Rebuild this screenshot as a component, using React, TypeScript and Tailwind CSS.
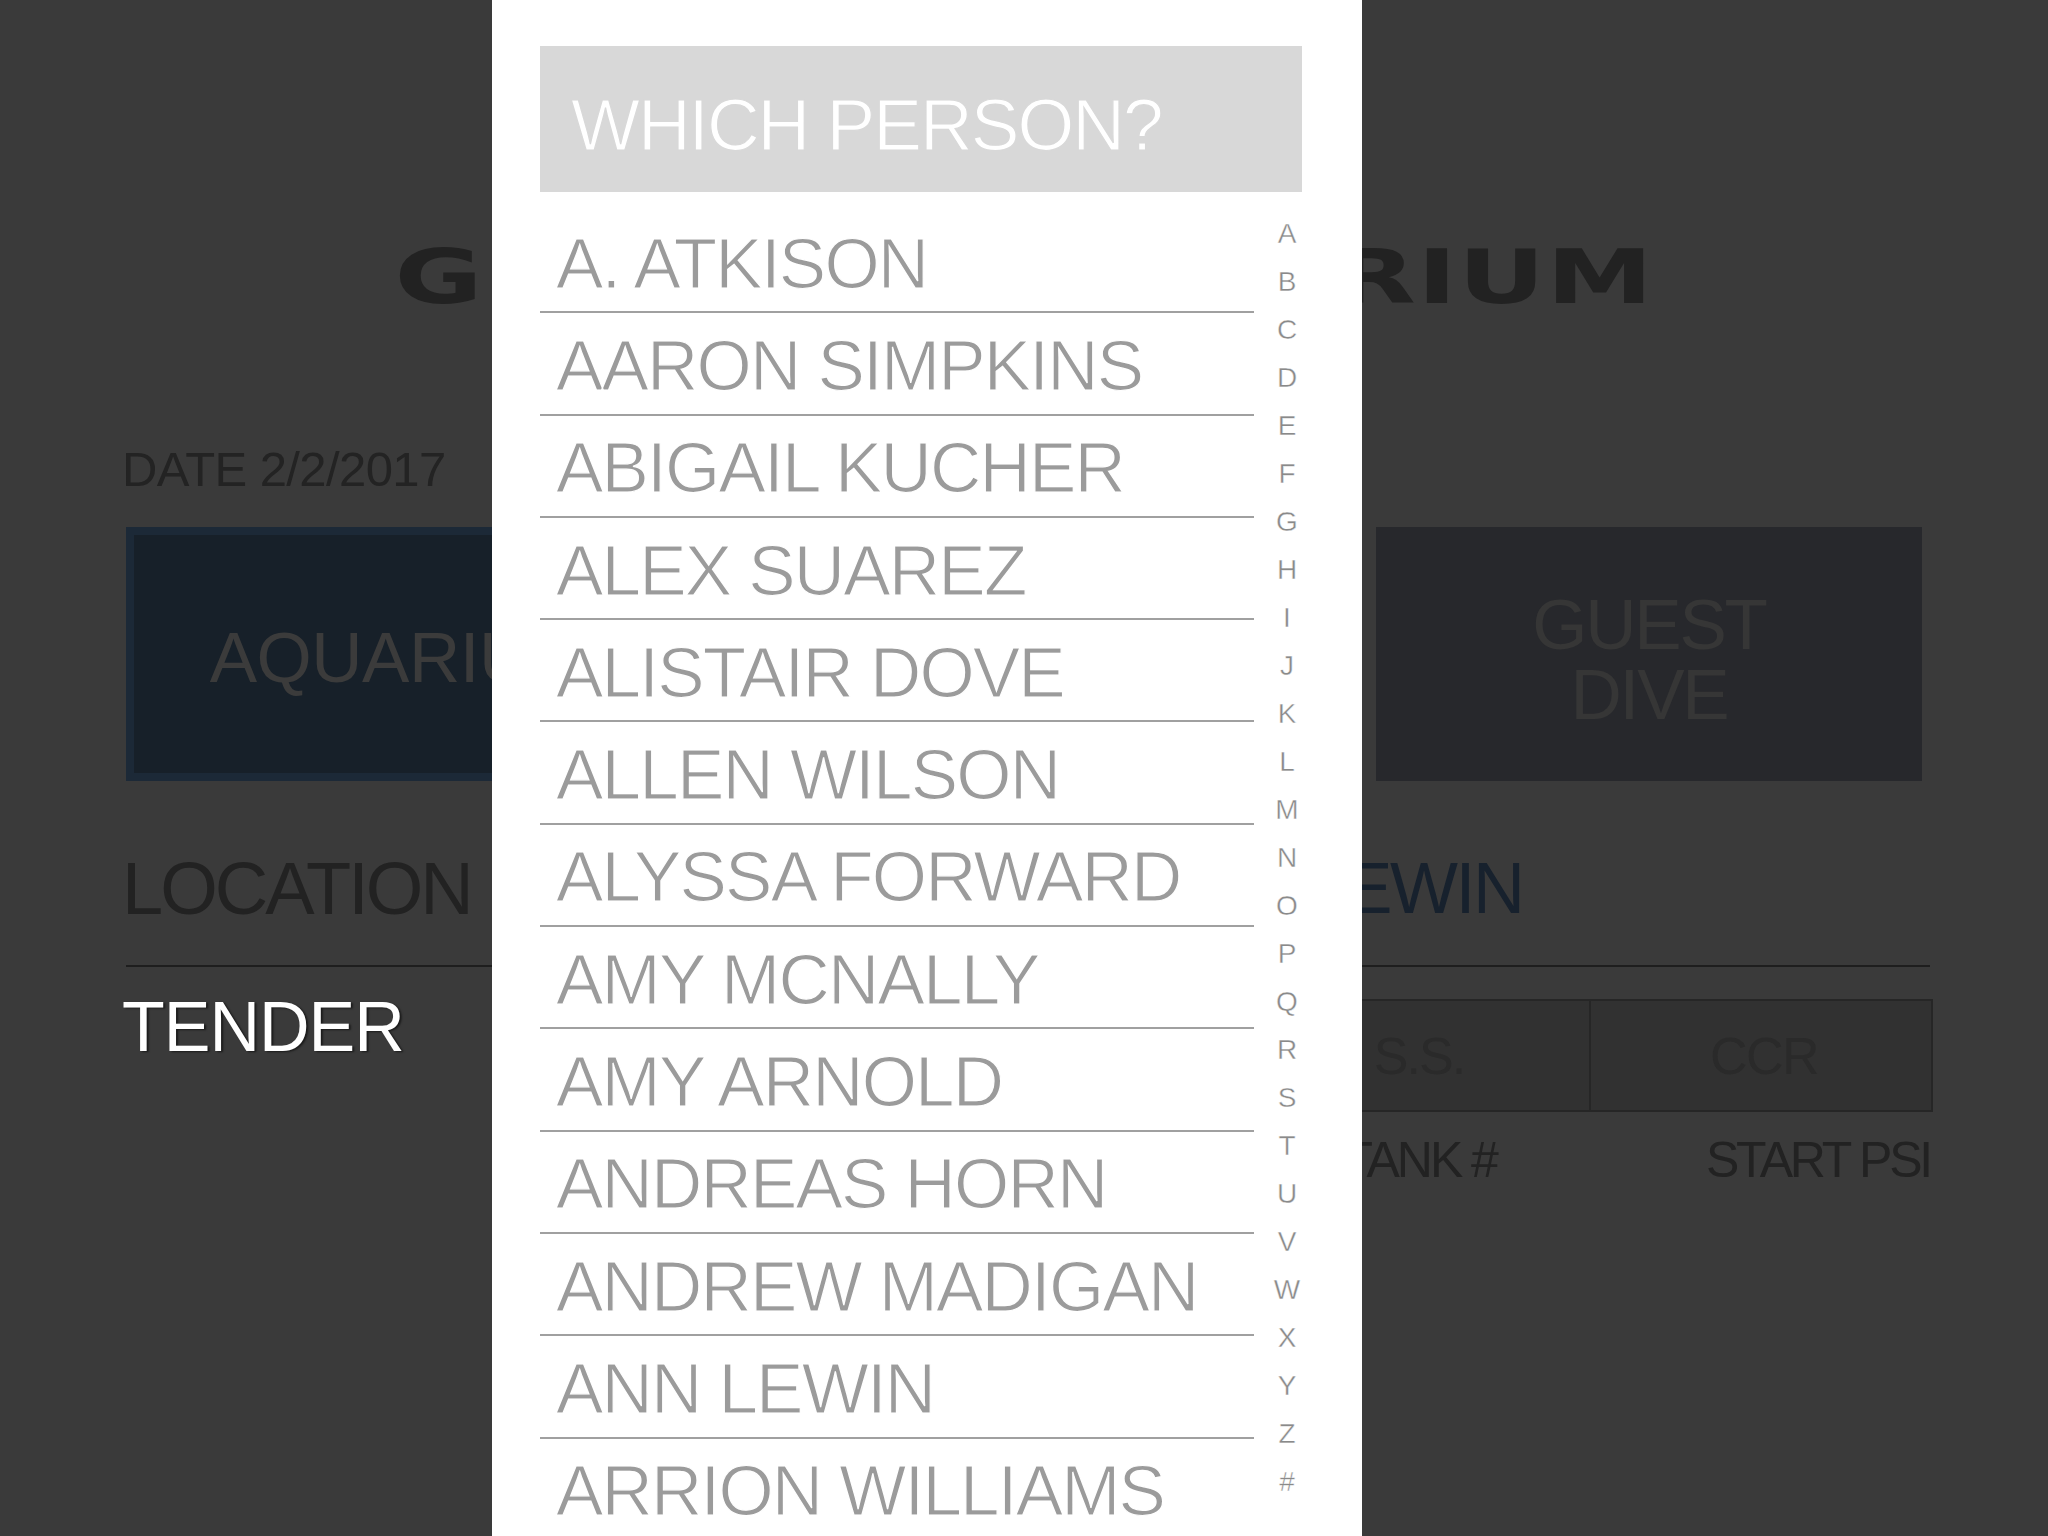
import React from "react";

const names = [
  "A. ATKISON",
  "AARON SIMPKINS",
  "ABIGAIL KUCHER",
  "ALEX SUAREZ",
  "ALISTAIR DOVE",
  "ALLEN WILSON",
  "ALYSSA FORWARD",
  "AMY MCNALLY",
  "AMY ARNOLD",
  "ANDREAS HORN",
  "ANDREW MADIGAN",
  "ANN LEWIN",
  "ARRION WILLIAMS",
];

const letters = [
  "A","B","C","D","E","F","G","H","I","J","K","L","M",
  "N","O","P","Q","R","S","T","U","V","W","X","Y","Z","#",
];

export default function App() {
  return (
    <div className="relative w-[2048px] h-[1536px] overflow-hidden bg-[#3a3a3a] font-['Liberation_Sans',Arial,sans-serif]">
      {/* Background page */}
      <div className="flex justify-center pt-[240px]">
        <span className="inline-block font-['DejaVu_Sans',sans-serif] font-bold text-[74px] leading-none tracking-[0.8px] scale-x-[1.45] text-[#222222]">
          GEORGIA AQUARIUM
        </span>
      </div>
      <div className="pl-[122px] pr-[118px]">
        <div className="mt-[131px] text-[49px] leading-none text-[#232323] tracking-[-0.6px]">
          DATE 2/2/2017
        </div>
        <div className="mt-[33px] ml-[4px] flex w-[1796px] justify-between h-[254px]">
          <div className="w-[546px] h-full bg-[#172029] border-[8px] border-[#1c2937] flex items-center justify-center">
            <span className="text-[71px] leading-[70px] text-[#3b3b3b] tracking-[-0.5px] pt-[8px]">AQUARIUM</span>
          </div>
          <div className="w-[546px] h-full bg-[#27282c] flex items-center justify-center">
            <span className="text-[71px] leading-[70px] text-[#363636] text-center tracking-[-2.2px] pt-[8px]">
              OTHER
              <br />
              DIVE
            </span>
          </div>
          <div className="w-[546px] h-full bg-[#27282c] flex items-center justify-center">
            <span className="text-[71px] leading-[70px] text-[#363636] text-center tracking-[-2.2px] pt-[12px]">
              GUEST
              <br />
              DIVE
            </span>
          </div>
        </div>
        <div className="mt-[71px] flex h-[74px]">
          <span className="w-[1023px] text-[74px] leading-none text-[#222222] tracking-[-3px]">LOCATION</span>
          <span className="text-[72px] leading-none text-[#17212d] tracking-[-2.5px]">ANN LEWIN</span>
        </div>
        <div className="mt-[39px] ml-[4px] w-[1804px] h-[2px] bg-[#1e1e1e]" />
        <div className="flex items-start">
          <span className="mt-[25px] text-[70px] leading-none text-white tracking-[-1px] [text-shadow:2px_1px_2px_rgba(0,0,0,0.55)]">
            TENDER
          </span>
          <div className="ml-auto -mr-[3px] mt-[32px] flex h-[113px] border-2 border-[#262626] bg-[#313131]">
            <div className="w-[342px] flex items-center justify-center text-[52px] leading-none text-[#2a2a2a] tracking-[-2px]">
              O.C.
            </div>
            <div className="w-[342px] border-l-2 border-[#262626] flex items-center justify-center text-[52px] leading-none text-[#2a2a2a] tracking-[-2px]">
              S.S.
            </div>
            <div className="w-[342px] border-l-2 border-[#262626] flex items-center justify-center text-[52px] leading-none text-[#2a2a2a] tracking-[-1.5px] pl-[6px]">
              CCR
            </div>
          </div>
        </div>
        <div className="mt-[23px] flex justify-end gap-[210px] text-[50px] leading-none text-[#222222]">
          <span className="tracking-[-3px]">TANK #</span>
          <span className="tracking-[-3.2px]">START PSI</span>
        </div>
      </div>

      {/* Modal */}
      <div className="absolute left-[492px] top-0 w-[870px] h-[1536px] bg-white pl-[48px] pt-[46px] overflow-hidden">
        <div className="w-[762px] h-[146px] bg-[#d8d8d8] pl-[31px] pt-[42px] text-white text-[73px] leading-none tracking-[-2px] [-webkit-text-stroke:1.2px_#d8d8d8]">
          WHICH PERSON?
        </div>
        <div className="flex mt-[19px]">
          <div className="w-[714px] flex flex-col">
            {names.map((n) => (
              <div
                key={n}
                className="h-[102.3px] shrink-0 border-b-2 border-[#a0a0a0] flex items-center pt-[4px] pl-[16px] text-[71px] leading-none text-[#9b9b9b] tracking-[-1.8px] whitespace-nowrap [-webkit-text-stroke:1.2px_#ffffff]"
              >
                {n}
              </div>
            ))}
          </div>
          <div className="w-[66px] -mt-[1px] flex flex-col">
            {letters.map((l) => (
              <div
                key={l}
                className="h-[48px] shrink-0 flex items-center justify-center text-[28px] leading-none text-[#8a8a8a] [-webkit-text-stroke:0.4px_#ffffff]"
              >
                {l}
              </div>
            ))}
          </div>
        </div>
      </div>
    </div>
  );
}
